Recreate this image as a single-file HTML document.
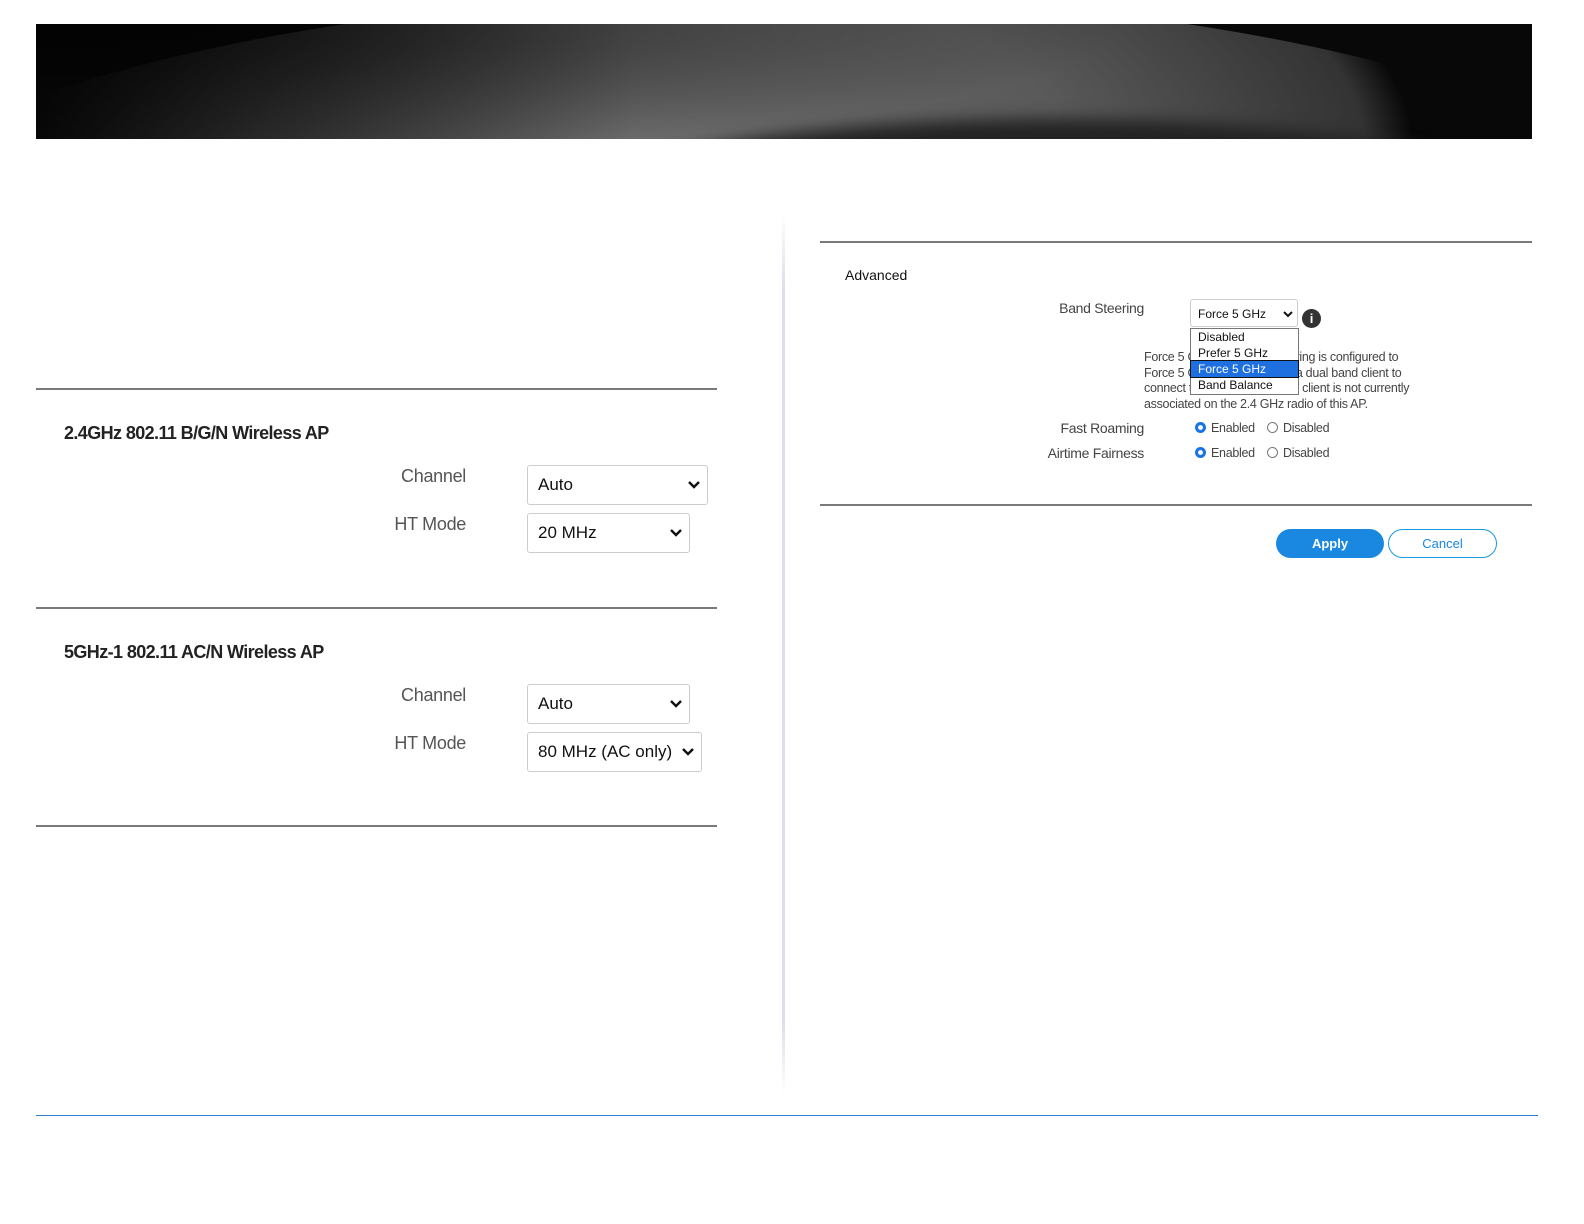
<!DOCTYPE html>
<html><head><meta charset="utf-8"><style>
body{margin:0;width:1584px;height:1224px;background:#fff;position:relative;overflow:hidden;font-family:"Liberation Sans",sans-serif}
.a{position:absolute}
.banner{left:36px;top:24px;width:1496px;height:115px;background:#080808;overflow:hidden}
.hr{height:2px;background:#7a7a7a}
.h{font-size:18px;color:#222;font-weight:bold;letter-spacing:-0.6px}
.lbl{font-size:18px;color:#555;text-align:right;width:200px;letter-spacing:-0.3px}
.sel{border:1px solid #ccc;border-radius:3px;background:#fff;font-size:17px;color:#111;box-sizing:border-box;padding:9px 10px;height:40px}
.sel svg{position:absolute;right:7px;top:14px}
.sm{font-size:12.5px;color:#444;letter-spacing:-0.3px}
.rad{width:11px;height:11px;border-radius:50%;border:1px solid #777;box-sizing:border-box}
.rad.on{border:none;background:radial-gradient(circle,#fff 0 2.2px,#1a73e8 2.6px)}
</style></head><body>
<div class="a banner">
<div class="a" style="left:-250px;top:-30px;width:1960px;height:620px;border-radius:50%;background:radial-gradient(ellipse at 42% 25%,#6c6c6c 0%,#5a5a5a 28%,#333 47%,rgba(20,20,20,0) 50%)"></div>
<div class="a" style="left:0;top:0;width:600px;height:115px;background:linear-gradient(90deg,rgba(8,8,8,1),rgba(8,8,8,.6) 35%,rgba(0,0,0,0))"></div>
<div class="a" style="left:0;top:0;width:1100px;height:140px;background:radial-gradient(ellipse at 0 0,rgba(0,0,0,.7),rgba(0,0,0,0) 70%)"></div>
<div class="a" style="left:560px;top:95px;width:920px;height:160px;border-radius:50%;background:#232323;filter:blur(8px)"></div>
</div>

<div class="a" style="left:782px;top:215px;width:3px;height:880px;background:linear-gradient(#fff,#dde0ea 8%,#dde0ea 92%,#fff)"></div>

<div class="a hr" style="left:36px;top:388px;width:681px"></div>
<div class="a h" style="left:64px;top:423px">2.4GHz 802.11 B/G/N Wireless AP</div>
<div class="a lbl" style="left:266px;top:466px">Channel</div>
<div class="a sel" style="left:527px;top:465px;width:181px">Auto<svg width="12" height="10" viewBox="0 0 12 10"><path d="M1 2l5 5 5-5" stroke="#111" stroke-width="2.4" fill="none"/></svg></div>
<div class="a lbl" style="left:266px;top:514px">HT Mode</div>
<div class="a sel" style="left:527px;top:513px;width:163px">20 MHz<svg width="12" height="10" viewBox="0 0 12 10"><path d="M1 2l5 5 5-5" stroke="#111" stroke-width="2.4" fill="none"/></svg></div>

<div class="a hr" style="left:36px;top:607px;width:681px"></div>
<div class="a h" style="left:64px;top:642px">5GHz-1 802.11 AC/N Wireless AP</div>
<div class="a lbl" style="left:266px;top:685px">Channel</div>
<div class="a sel" style="left:527px;top:684px;width:163px">Auto<svg width="12" height="10" viewBox="0 0 12 10"><path d="M1 2l5 5 5-5" stroke="#111" stroke-width="2.4" fill="none"/></svg></div>
<div class="a lbl" style="left:266px;top:733px">HT Mode</div>
<div class="a sel" style="left:527px;top:732px;width:175px">80 MHz (AC only)<svg width="12" height="10" viewBox="0 0 12 10"><path d="M1 2l5 5 5-5" stroke="#111" stroke-width="2.4" fill="none"/></svg></div>
<div class="a hr" style="left:36px;top:825px;width:681px"></div>

<div class="a hr" style="left:820px;top:241px;width:712px"></div>
<div class="a" style="left:845px;top:267px;font-size:14px;color:#111">Advanced</div>
<div class="a sm" style="left:1000px;top:300px;width:144px;text-align:right;font-size:14px">Band Steering</div>
<div class="a" style="left:1190px;top:299px;width:108px;height:28px;border:1px solid #ccc;border-radius:3px;box-sizing:border-box;font-size:12px;padding:7px 0 0 7px;color:#111">Force 5 GHz<svg class="a" style="right:4px;top:10px" width="10" height="8" viewBox="0 0 10 8"><path d="M1 2l4 4 4-4" stroke="#111" stroke-width="2" fill="none"/></svg></div>
<div class="a" style="left:1302px;top:309px;width:19px;height:19px;border-radius:50%;background:#333;color:#fff;font-size:13px;font-weight:bold;text-align:center;line-height:19px">i</div>
<div class="a sm" style="left:1144px;top:350px;width:320px;line-height:15.5px">Force 5 GHz......... band steering is configured to<br>Force 5 GHz, it will not allow a dual band client to<br>connect to 2.4 GHz only if the client is not currently<br>associated on the 2.4 GHz radio of this AP.</div>
<div class="a" style="left:1190px;top:328px;width:109px;height:67px;background:#fff;border:1px solid #777;box-sizing:border-box;font-size:12px;color:#111;line-height:16px">
<div style="padding-left:7px">Disabled</div><div style="padding-left:7px">Prefer 5 GHz</div><div style="padding-left:7px;background:#1e6fe0;color:#fff;outline:1px solid #111">Force 5 GHz</div><div style="padding-left:7px">Band Balance</div></div>
<div class="a sm" style="left:1000px;top:420px;width:144px;text-align:right;font-size:14px">Fast Roaming</div>
<div class="a rad on" style="left:1195px;top:422px"></div><div class="a sm" style="left:1211px;top:421px">Enabled</div>
<div class="a rad" style="left:1267px;top:422px"></div><div class="a sm" style="left:1283px;top:421px">Disabled</div>
<div class="a sm" style="left:1000px;top:445px;width:144px;text-align:right;font-size:14px">Airtime Fairness</div>
<div class="a rad on" style="left:1195px;top:447px"></div><div class="a sm" style="left:1211px;top:446px">Enabled</div>
<div class="a rad" style="left:1267px;top:447px"></div><div class="a sm" style="left:1283px;top:446px">Disabled</div>
<div class="a hr" style="left:820px;top:504px;width:712px"></div>
<div class="a" style="left:1276px;top:529px;width:108px;height:29px;border-radius:15px;background:#1a88e0;color:#fff;font-size:13px;font-weight:bold;text-align:center;line-height:29px">Apply</div>
<div class="a" style="left:1388px;top:529px;width:109px;height:29px;border-radius:15px;border:1px solid #1a9ae0;box-sizing:border-box;color:#1a88e0;font-size:13px;text-align:center;line-height:27px">Cancel</div>

<div class="a" style="left:36px;top:1115px;width:1502px;height:1px;background:#2b7fd0"></div>
</body></html>
